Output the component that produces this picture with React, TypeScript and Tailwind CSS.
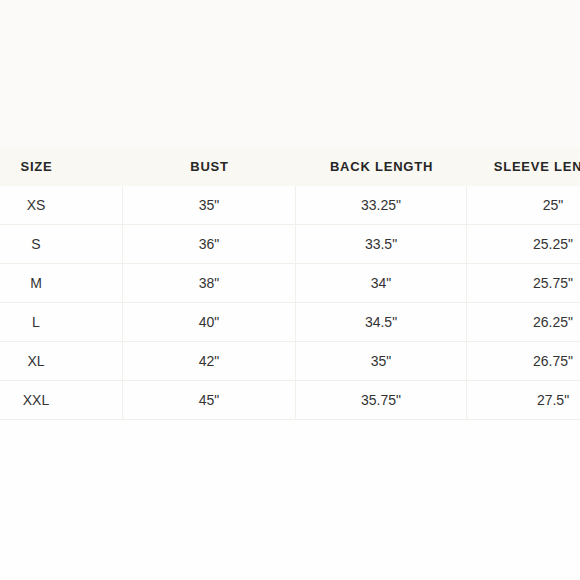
const columns = ["SIZE", "BUST", "BACK LENGTH", "SLEEVE LENGTH"];

const rows = [
  ["XS", "35\"", "33.25\"", "25\""],
  ["S", "36\"", "33.5\"", "25.25\""],
  ["M", "38\"", "34\"", "25.75\""],
  ["L", "40\"", "34.5\"", "26.25\""],
  ["XL", "42\"", "35\"", "26.75\""],
  ["XXL", "45\"", "35.75\"", "27.5\""],
];

export default function App() {
  return (
    <div
      className="w-[580px] h-[580px] overflow-hidden bg-[#fefefe] flex flex-col"
      style={{ fontFamily: '"Liberation Sans", Arial, sans-serif' }}
    >
      <div className="h-[148px] bg-[#fbfaf8] shrink-0" />
      <div className="overflow-hidden">
        <div className="w-[689px] -ml-[50px]">
          <div className="grid grid-cols-[173px_173px_171px_172px] h-[38px] bg-[#faf8f3] items-center">
            {columns.map((c) => (
              <div
                key={c}
                className="text-center text-[13px] font-bold tracking-[0.06em] text-[#262626] whitespace-nowrap"
              >
                {c}
              </div>
            ))}
          </div>
          {rows.map((r) => (
            <div
              key={r[0]}
              className="grid grid-cols-[173px_173px_171px_172px] h-[39px] border-b border-[#f2f0eb]"
            >
              {r.map((v, i) => (
                <div
                  key={i}
                  className={`flex items-center justify-center text-[14px] text-[#333] ${
                    i < 3 ? "border-r border-[#f2f0eb]" : ""
                  }`}
                >
                  {v}
                </div>
              ))}
            </div>
          ))}
        </div>
      </div>
    </div>
  );
}
